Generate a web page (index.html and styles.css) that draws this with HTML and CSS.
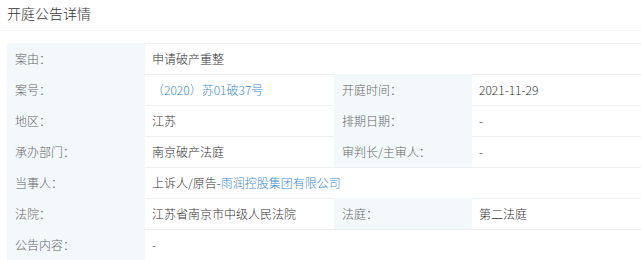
FILE: index.html
```html
<!DOCTYPE html>
<html lang="zh">
<head>
<meta charset="utf-8">
<link rel="stylesheet" href="styles.css">
</head>
<body>
<div class="title">开庭公告详情</div>
<table class="detail">
  <colgroup>
    <col class="c1"><col class="c2"><col class="c3"><col class="c4">
  </colgroup>
  <tr>
    <td class="lbl">案由：</td>
    <td class="val" colspan="3">申请破产重整</td>
  </tr>
  <tr>
    <td class="lbl">案号：</td>
    <td class="val"><span class="link">（2020）苏01破37号</span></td>
    <td class="lbl">开庭时间：</td>
    <td class="val">2021-11-29</td>
  </tr>
  <tr>
    <td class="lbl">地区：</td>
    <td class="val">江苏</td>
    <td class="lbl">排期日期：</td>
    <td class="val">-</td>
  </tr>
  <tr>
    <td class="lbl">承办部门：</td>
    <td class="val">南京破产法庭</td>
    <td class="lbl">审判长/主审人：</td>
    <td class="val">-</td>
  </tr>
  <tr>
    <td class="lbl">当事人：</td>
    <td class="val" colspan="3">上诉人/原告-<span class="link">雨润控股集团有限公司</span></td>
  </tr>
  <tr>
    <td class="lbl">法院：</td>
    <td class="val">江苏省南京市中级人民法院</td>
    <td class="lbl">法庭：</td>
    <td class="val">第二法庭</td>
  </tr>
  <tr>
    <td class="lbl">公告内容：</td>
    <td class="val" colspan="3">-</td>
  </tr>
</table>
</body>
</html>
```

FILE: styles.css
```css
html, body {
  margin: 0;
  padding: 0;
  background: #fff;
  font-family: "Noto Sans CJK SC", "Noto Sans", sans-serif;
  font-weight: 300;
  color: #333;
}
.title {
  height: 31px;
  box-sizing: border-box;
  padding: 3px 7px 0;
  font-size: 14px;
  line-height: 20px;
  color: #333;
  border-bottom: 1px solid #f1f2f3;
}
.detail {
  margin: 12px 0 0 7px;
  width: 634px;
  border-collapse: separate;
  border-spacing: 0;
  table-layout: fixed;
  font-size: 12px;
}
.c1 { width: 138px; }
.c2 { width: 189px; }
.c3 { width: 138px; }
.c4 { width: 169px; }
.detail td {
  height: 31px;
  padding: 0 8px;
  box-sizing: border-box;
  line-height: 16px;
  vertical-align: middle;
  white-space: nowrap;
}
.lbl {
  background: #f3f8fb;
  color: #666;
  border-top: 1px solid #f3f8fb;
}
.val {
  color: #333;
  border-top: 1px solid #eef0f2;
  padding-left: 7px !important;
}
.link {
  color: #3b8cd6;
}
```
